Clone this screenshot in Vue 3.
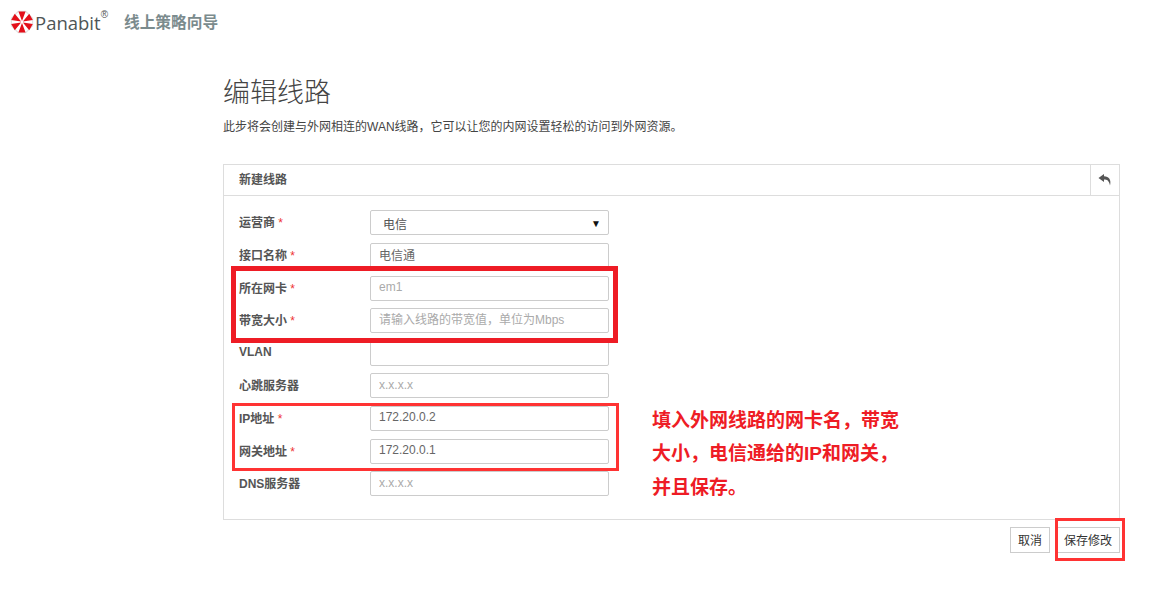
<script setup>
const rows = [
  { label: '接口名称', req: true, value: '电信通' },
  { label: '所在网卡', req: true, ph: 'em1' },
  { label: '带宽大小', req: true, ph: '请输入线路的带宽值，单位为Mbps' },
  { label: 'VLAN' },
  { label: '心跳服务器', ph: 'x.x.x.x' },
  { label: 'IP地址', req: true, value: '172.20.0.2' },
  { label: '网关地址', req: true, value: '172.20.0.1' },
  { label: 'DNS服务器', ph: 'x.x.x.x' }
]
const point = (deg, r) => {
  const a = (deg * Math.PI) / 180
  return `${(12 + r * Math.cos(a)).toFixed(2)} ${(12 + r * Math.sin(a)).toFixed(2)}`
}
const wedges = [-90, -30, 30, 90, 150, 210]
  .map((d) => `M${point(d, 1)}L${point(d - 19, 11)}L${point(d + 19, 11)}Z`)
  .join('')
</script>

<template>
  <div class="page">
    <header class="top">
      <svg class="logo" width="24" height="24" viewBox="0 0 24 24">
        <path d="M8 .8h8L23.200 8v8L16 23.200H8L.8 16V8z" fill="#e2e2e2" />
        <path d="M8.500 2h7L22 8.500v7L15.500 22h-7L2 15.500v-7z" fill="#fff" />
        <path :d="wedges" fill="#e3101a" />
      </svg>
      <span class="brand">Panabit</span>
      <sup class="reg">®</sup>
      <span class="wizard">线上策略向导</span>
    </header>

    <main class="main">
      <h1 class="title">编辑线路</h1>
      <p class="desc">此步将会创建与外网相连的WAN线路，它可以让您的内网设置轻松的访问到外网资源。</p>

      <section class="panel">
        <div class="panel-head">
          <span class="panel-title">新建线路</span>
          <span class="back">
            <svg width="14" height="12" viewBox="0 0 14 12">
              <path d="M6 0L.5 4 6 8V5.400c3 0 5 .9 6 6.100 1.500-5.500-1-9-6-9.200z" fill="#555" />
            </svg>
          </span>
        </div>
        <div class="form">
          <div class="row">
            <label class="lbl">运营商 <i>*</i></label>
            <div class="sel"><span>电信</span><b>▼</b></div>
          </div>
          <div v-for="r in rows" :key="r.label" class="row">
            <label class="lbl">{{ r.label }} <i v-if="r.req">*</i></label>
            <input class="inp" :value="r.value" :placeholder="r.ph" />
          </div>
        </div>
      </section>

      <div class="actions">
        <button class="btn">取消</button>
        <button class="btn">保存修改</button>
      </div>
    </main>

    <div class="mark m1"></div>
    <div class="mark m2"></div>
    <div class="mark m3"></div>
    <p class="note">填入外网线路的网卡名，带宽<br />大小，电信通给的IP和网关，<br />并且保存。</p>
  </div>
</template>

<style>
html, body { margin: 0; background: #fff; }
</style>

<style scoped>
.page {
  position: relative;
  width: 1176px;
  height: 593px;
  overflow: hidden;
  font-family: "Liberation Sans", "Noto Sans CJK SC", sans-serif;
  color: #333;
}
.top {
  display: flex;
  align-items: center;
  height: 44px;
  padding-left: 10px;
}
.logo { flex: none; }
.brand { margin-left: 1px; font-size: 18.500px; color: #4f5556; font-family: "Open Sans", sans-serif; }
.reg { font-size: 10px; color: #555; align-self: flex-start; margin: 10px 0 0 0; line-height: 1; }
.wizard { margin-left: 16px; font-size: 15.700px; font-weight: 700; color: #7b8b8d; position: relative; top: -1px; }
.main { margin-left: 223px; width: 897px; }
.title {
  margin: 29px 0 0;
  font-size: 27px;
  line-height: 36px;
  font-weight: 300;
  color: #444;
  font-family: "Noto Sans CJK SC", sans-serif;
}
.desc { margin: 9px 0 0; font-size: 12px; line-height: 18px; color: #444; }
.panel {
  margin-top: 28px;
  height: 356px;
  box-sizing: border-box;
  border: 1px solid #ddd;
}
.panel-head {
  display: flex;
  align-items: center;
  justify-content: space-between;
  height: 30px;
  border-bottom: 1px solid #ddd;
}
.panel-title { margin-left: 15px; font-size: 12px; font-weight: 700; color: #555; position: relative; top: -2px; }
.back {
  display: flex;
  align-items: center;
  justify-content: center;
  width: 28px;
  height: 30px;
  border-left: 1px solid #ddd;
}
.form {
  display: flex;
  flex-direction: column;
  gap: 7.600px;
  padding: 14.400px 0 0 15px;
}
.row { display: flex; align-items: center; height: 25px; }
.lbl { width: 131px; font-size: 12px; font-weight: 700; color: #555; position: relative; top: -1px; }
.lbl i { color: #e33; font-style: normal; font-weight: 400; }
.sel, .inp {
  box-sizing: border-box;
  width: 239px;
  height: 25px;
  border: 1px solid #ccc;
  border-radius: 2px;
  background: #fff;
  font-family: inherit;
  font-size: 12px;
  color: #555;
}
.inp { padding: 0 8px 2px; outline: none; color: #666; }
.inp::placeholder { color: #aaa; opacity: 1; }
.sel { display: flex; align-items: center; justify-content: space-between; padding: 1px 7px 0 12px; }
.sel b { font-size: 10px; color: #111; font-weight: 400; }
.actions { display: flex; justify-content: flex-end; gap: 6px; margin-top: 7px; }
.btn {
  height: 26px;
  padding: 0 7px 2px;
  border: 1px solid #ccc;
  border-radius: 0;
  background: #fff;
  font-family: inherit;
  font-size: 12px;
  color: #333;
}
.mark { position: absolute; box-sizing: border-box; }
.m1 { left: 231px; top: 266px; width: 387px; height: 77px; border: 5px solid #ee1c25; }
.m2 { left: 232px; top: 403px; width: 387px; height: 68px; border: 3px solid #f33; }
.m3 { left: 1055px; top: 518px; width: 70px; height: 43px; border: 3px solid #f33; }
.note {
  position: absolute;
  left: 652px;
  top: 403.500px;
  margin: 0;
  font-size: 19px;
  line-height: 33.500px;
  font-weight: 700;
  color: #ee1c25;
  white-space: nowrap;
}
</style>
